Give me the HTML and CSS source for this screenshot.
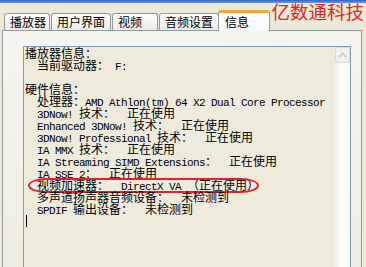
FILE: index.html
```html
<!DOCTYPE html>
<html lang="zh-CN">
<head>
    <meta charset="UTF-8">
    <title>信息</title>
    <link rel="stylesheet" href="styles.css">
</head>
<body>
    <div class="titlebar"></div>
    <div class="logo">亿数通科技</div>
    <div class="tabs">
        <div class="tab">播放器</div>
        <div class="tab wide">用户界面</div>
        <div class="tab">视频</div>
        <div class="tab wide">音频设置</div>
        <div class="tab on">信息</div>
    </div>
    <div class="panel">
        <div class="textbox">
            <div class="text">
                <div class="ln"><span class="zh">播放器信息：</span></div>
                <div class="ln">  <span class="zh">当前驱动器：</span> F:</div>
                <div class="ln"></div>
                <div class="ln"><span class="zh">硬件信息：</span></div>
                <div class="ln">  <span class="zh">处理器：</span>AMD Athlon(tm) 64 X2 Dual Core Processor</div>
                <div class="ln">  3DNow! <span class="zh">技术：</span>  <span class="zh">正在使用</span></div>
                <div class="ln">  Enhanced 3DNow! <span class="zh">技术：</span>  <span class="zh">正在使用</span></div>
                <div class="ln">  3DNow! Professional <span class="zh">技术：</span>  <span class="zh">正在使用</span></div>
                <div class="ln">  IA MMX <span class="zh">技术：</span>  <span class="zh">正在使用</span></div>
                <div class="ln">  IA Streaming SIMD Extensions<span class="zh">：</span>  <span class="zh">正在使用</span></div>
                <div class="ln">  IA SSE 2<span class="zh">：</span>  <span class="zh">正在使用</span></div>
                <div class="ln hl">  <span class="zh">视频加速器：</span>  DirectX VA <span class="zh">（正在使用）</span></div>
                <div class="ln">  <span class="zh">多声道扬声器音频设备：</span>  <span class="zh">未检测到</span></div>
                <div class="ln">  SPDIF <span class="zh">输出设备：</span>  <span class="zh">未检测到</span></div>
                <div class="ln"><span class="caret"></span></div>
            </div>
            <div class="scrollbar">
                <div class="sb-up">
                    <svg width="9" height="6" viewBox="0 0 9 6"><path d="M1 5 L4.5 1.5 L8 5" fill="none" stroke="#c9cbc4" stroke-width="1.6"/></svg>
                </div>
            </div>
        </div>
    </div>
</body>
</html>
```

FILE: styles.css
```css
body {
    margin: 0;
    height: 267px;
    overflow: hidden;
    background-color: #ece9d8;
    font-family: "Noto Sans CJK SC", sans-serif;
    position: relative;
}
.titlebar {
    height: 3px;
    background: linear-gradient(#2f64c8, #6d96dc);
}
.logo {
    position: absolute;
    top: 0;
    right: 2px;
    font-size: 18.5px;
    line-height: 22px;
    color: #e3261d;
}
.tabs {
    display: flex;
    align-items: flex-end;
    gap: 1px;
    height: 20px;
    margin-top: 7px;
    padding-left: 4px;
}
.tab {
    box-sizing: border-box;
    width: 46px;
    height: 17px;
    padding-left: 5px;
    border: 1px solid #919b9c;
    border-bottom: none;
    border-radius: 3px 3px 0 0;
    background: linear-gradient(#ffffff, #ecebe6);
    font-size: 12px;
    line-height: 15px;
    color: #000;
}
.tab.wide {
    width: 60px;
}
.tab.on {
    width: 52px;
    height: 21px;
    margin-left: -2px;
    margin-bottom: -1px;
    padding-left: 6px;
    border-top: 3px solid #f0a93a;
    background: #fcfcfe;
    line-height: 17px;
    position: relative;
    z-index: 1;
}
.panel {
    margin: 0 4px 0 2px;
    height: 240px;
    padding: 15px 10px 0 20px;
    border: 1px solid #919b9c;
    background: linear-gradient(#f5f4ee, #efede2);
}
.textbox {
    display: flex;
    width: 326px;
    height: 230px;
    border: 1px solid #7f9db9;
    background-color: #eeebdd;
}
.text {
    flex: 1;
    padding-left: 1px;
    font-family: "Liberation Mono", "Noto Sans CJK SC", monospace;
    font-size: 11px;
    letter-spacing: -0.6px;
    color: #000;
}
.ln {
    height: 12px;
    line-height: 12px;
    white-space: pre;
    position: relative;
}
.zh {
    font-family: "Noto Sans CJK SC", sans-serif;
    font-size: 12px;
    letter-spacing: 0;
}
.hl::before {
    content: "";
    position: absolute;
    left: 3px;
    top: -1px;
    width: 227px;
    height: 11px;
    border: 2px solid #e4202c;
    border-radius: 20px / 8px;
}
.caret {
    display: inline-block;
    width: 1px;
    height: 12px;
    margin-left: 1px;
    background: #000;
    vertical-align: top;
}
.scrollbar {
    width: 16px;
    background: linear-gradient(to right, #efeee6, #fdfdfb 45%, #ffffff 70%, #f3f3ee);
}
.sb-up {
    box-sizing: border-box;
    height: 16px;
    margin: 0 0 0 1px;
    border: 1px solid #dcdcd2;
    border-radius: 2px;
    background: #f1f0ea;
    display: flex;
    align-items: center;
    justify-content: center;
}
```
